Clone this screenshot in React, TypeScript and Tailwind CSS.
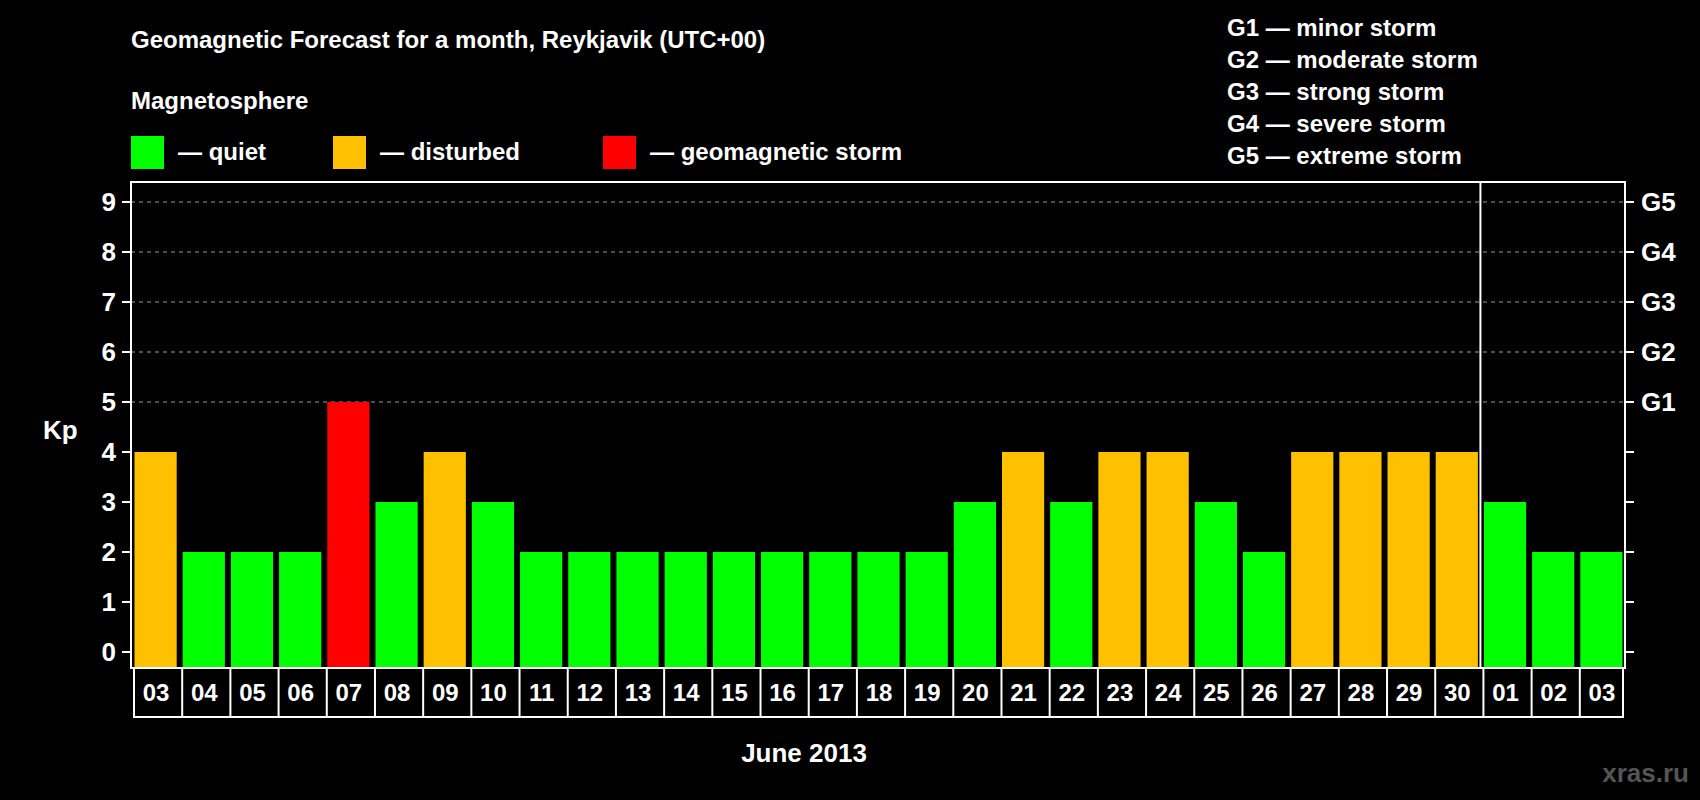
import React from 'react';

const days = ['03','04','05','06','07','08','09','10','11','12','13','14','15','16','17','18','19','20','21','22','23','24','25','26','27','28','29','30','01','02','03'];
const kp = [4,2,2,2,5,3,4,3,2,2,2,2,2,2,2,2,2,3,4,3,4,4,3,2,4,4,4,4,3,2,2];

const colorFor = (v: number) => (v >= 5 ? '#ff0000' : v === 4 ? '#ffc000' : '#00ff00');

const L = 131, R = 1625, TOP = 182, BOT = 668, ZERO = 652, UNIT = 50;
const CW = (R - L) / 31;
const yOf = (v: number) => ZERO - v * UNIT;

const storms = ['G1 — minor storm','G2 — moderate storm','G3 — strong storm','G4 — severe storm','G5 — extreme storm'];

export default function App() {
  return (
    <div className="w-[1700px] h-[800px] bg-black text-white overflow-hidden" style={{ fontFamily: '"Liberation Sans", Arial, sans-serif' }}>
      <div className="flex h-[175px]">
        <div className="w-[1227px] pl-[131px] pt-[26px] font-bold">
          <div className="text-[24px] leading-[28px]">Geomagnetic Forecast for a month, Reykjavik (UTC+00)</div>
          <div className="text-[24px] leading-[28px] mt-[33px]">Magnetosphere</div>
          <div className="flex items-center mt-[19px] text-[24px]">
            <div className="w-[33px] h-[33px] bg-[#00ff00]" />
            <span className="ml-[14px] w-[155px]">— quiet</span>
            <div className="w-[33px] h-[33px] bg-[#ffc000]" />
            <span className="ml-[14px] w-[223px]">— disturbed</span>
            <div className="w-[33px] h-[33px] bg-[#ff0000]" />
            <span className="ml-[14px]">— geomagnetic storm</span>
          </div>
        </div>
        <div className="pt-[12px] font-bold text-[24px] leading-[32px]">
          {storms.map((s) => (
            <div key={s}>{s}</div>
          ))}
        </div>
      </div>
      <svg width="1700" height="625" viewBox="0 175 1700 625" fontFamily='"Liberation Sans", Arial, sans-serif' fontWeight="bold">
        {[5,6,7,8,9].map((v) => (
          <line key={v} x1={L} x2={R} y1={yOf(v)} y2={yOf(v)} stroke="#999" strokeWidth="1.2" strokeDasharray="4 4" />
        ))}
        {kp.map((v, i) => (
          <rect key={i} x={L + i * CW + 3.5} y={yOf(v)} width={CW - 6} height={BOT - yOf(v)} fill={colorFor(v)} />
        ))}
        <rect x={L} y={TOP} width={R - L} height={BOT - TOP} fill="none" stroke="#fff" strokeWidth="2" />
        <line x1={L + 28 * CW} x2={L + 28 * CW} y1={TOP} y2={BOT} stroke="#fff" strokeWidth="2" />
        {[0,1,2,3,4,5,6,7,8,9].map((v) => (
          <g key={v}>
            <line x1={L - 9} x2={L} y1={yOf(v)} y2={yOf(v)} stroke="#fff" strokeWidth="2" />
            <line x1={R} x2={R + 9} y1={yOf(v)} y2={yOf(v)} stroke="#fff" strokeWidth="2" />
            <text x={116} y={yOf(v) + 9} fontSize="26" fill="#fff" textAnchor="end">{v}</text>
            {v >= 5 && (
              <text x={1641} y={yOf(v) + 9} fontSize="26" fill="#fff">G{v - 4}</text>
            )}
          </g>
        ))}
        <text x={43} y={439} fontSize="26" fill="#fff">Kp</text>
        <line x1={L + 3} x2={R - 2} y1={717} y2={717} stroke="#fff" strokeWidth="2" />
        {days.map((d, i) => (
          <g key={i}>
            <line x1={L + i * CW + 3} x2={L + i * CW + 3} y1={BOT} y2={718} stroke="#fff" strokeWidth="2" />
            <text x={L + i * CW + CW / 2 + 1} y={701} fontSize="24" fill="#fff" textAnchor="middle">{d}</text>
          </g>
        ))}
        <line x1={R - 2} x2={R - 2} y1={BOT} y2={718} stroke="#fff" strokeWidth="2" />
        <text x={804} y={762} fontSize="26" fill="#fff" textAnchor="middle">June 2013</text>
        <text x={1689} y={782} fontSize="26" fill="#555" textAnchor="end">xras.ru</text>
      </svg>
    </div>
  );
}
